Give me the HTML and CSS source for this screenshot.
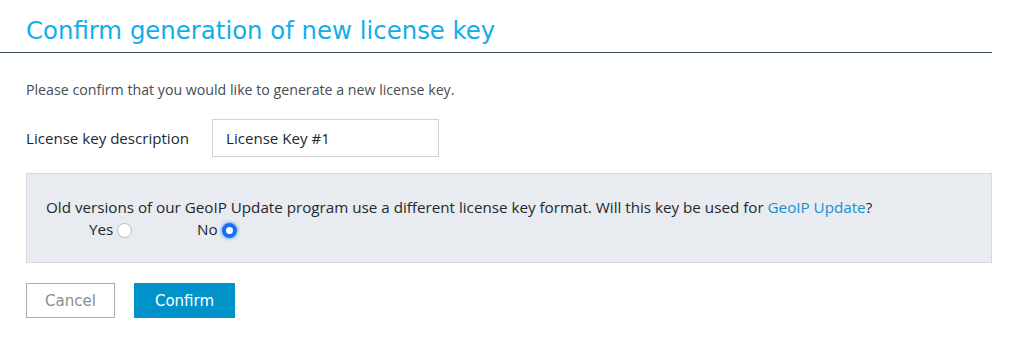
FILE: index.html
```html
<!DOCTYPE html>
<html>
<head>
<meta charset="utf-8">
<link rel="stylesheet" href="styles.css">
</head>
<body>
<div class="page">
  <h1 class="title">Confirm generation of new license key</h1>
  <div class="content">
    <p class="intro">Please confirm that you would like to generate a new license key.</p>
    <div class="field">
      <label class="field-label" for="desc">License key description</label>
      <input class="field-input" id="desc" type="text" value="License Key #1">
    </div>
    <div class="notice">
      <p class="notice-text">Old versions of our GeoIP Update program use a different license key format. Will this key be used for <a class="link" href="#">GeoIP Update</a>?</p>
      <div class="choices">
        <label class="choice choice-yes">Yes <span class="radio"></span></label>
        <label class="choice choice-no">No <span class="radio radio-on"></span></label>
      </div>
    </div>
    <div class="actions">
      <button class="btn btn-cancel">Cancel</button>
      <button class="btn btn-confirm">Confirm</button>
    </div>
  </div>
</div>
</body>
</html>
```

FILE: styles.css
```css
html, body {
  margin: 0;
  padding: 0;
  background: #ffffff;
}
body {
  font-family: "Open Sans", "Noto Sans", sans-serif;
  color: #333a40;
}
.page {
  width: 992px;
}
.title {
  margin: 0;
  padding: 16px 0 0 26px;
  height: 36px;
  font-family: "DejaVu Sans", sans-serif;
  font-weight: normal;
  font-size: 24.4px;
  line-height: 30px;
  color: #12aee8;
  border-bottom: 1.5px solid #34495a;
}
.content {
  padding: 0 0 0 26px;
}
.intro {
  margin: 27px 0 0 0;
  font-size: 14.2px;
  line-height: 20px;
  color: #464c53;
}
.field {
  display: flex;
  align-items: center;
  margin-top: 19px;
}
.field-label {
  width: 186px;
  font-size: 15.1px;
  color: #22282e;
}
.field-input {
  box-sizing: border-box;
  width: 227px;
  height: 38px;
  padding: 0 13px;
  border: 1px solid #cfd3d8;
  font-family: "Open Sans", "Noto Sans", sans-serif;
  font-size: 15.1px;
  color: #22282e;
  outline: none;
}
.notice {
  box-sizing: border-box;
  margin-top: 16px;
  width: 966px;
  height: 90px;
  padding: 23px 0 0 19px;
  background: #e8ebef;
  border: 1px solid #d6d9de;
}
.notice-text {
  margin: 0;
  font-size: 15.2px;
  line-height: 21px;
  color: #22282e;
}
.link {
  color: #1591cf;
  text-decoration: none;
}
.choices {
  display: flex;
  padding-left: 43px;
  margin-top: 1px;
  font-size: 15.2px;
  line-height: 21px;
  color: #22282e;
}
.choice {
  display: flex;
  align-items: center;
  gap: 4px;
}
.choice-yes {
  width: 108px;
}
.radio {
  box-sizing: border-box;
  width: 15px;
  height: 15px;
  border-radius: 50%;
  border: 1px solid #b8bcc2;
  background: #ffffff;
  margin-top: 1px;
}
.radio-on {
  border: 4.5px solid #1a6ef5;
  box-shadow: 0 0 3px 1px rgba(30, 120, 255, 0.55);
}
.actions {
  display: flex;
  gap: 19px;
  margin-top: 20px;
}
.btn {
  box-sizing: border-box;
  height: 35px;
  font-family: "DejaVu Sans", sans-serif;
  font-size: 15px;
  border-radius: 0;
  cursor: pointer;
}
.btn-cancel {
  width: 89px;
  background: #ffffff;
  border: 1px solid #a9acaf;
  color: #8a8e92;
}
.btn-confirm {
  width: 101px;
  background: #0093c9;
  border: none;
  color: #ffffff;
}
```
